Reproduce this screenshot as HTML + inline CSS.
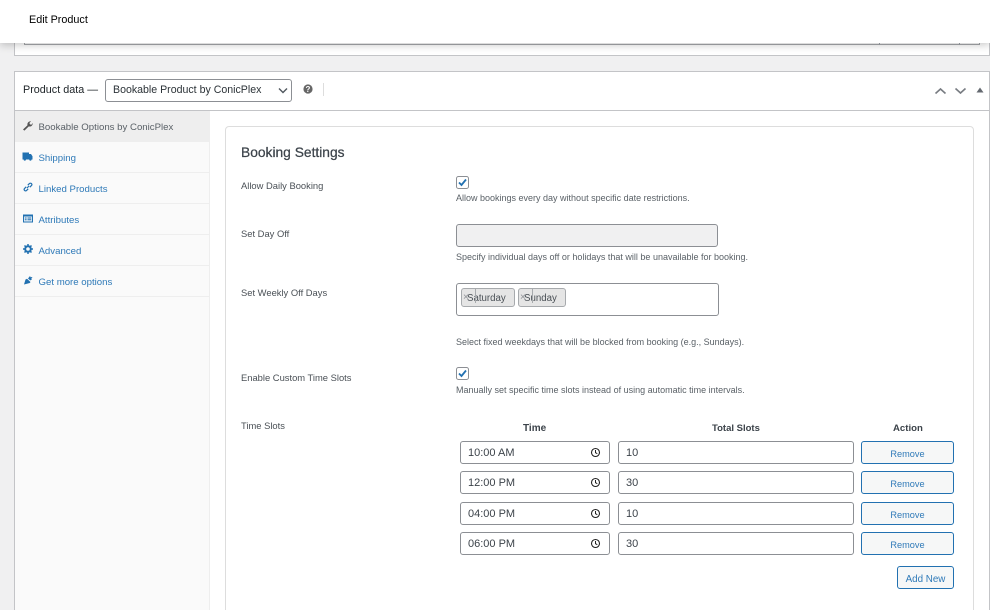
<!DOCTYPE html>
<html><head><meta charset="utf-8">
<style>
html,body{margin:0;padding:0;width:990px;height:610px;overflow:hidden;background:#f0f0f1}
body{position:relative;font-family:"Liberation Sans",sans-serif;font-size:9.65px;color:#3c434a}
.a{position:absolute;box-sizing:border-box}
.t{position:absolute;white-space:nowrap;line-height:14px}
.nav{color:#2f7ab8;left:38.5px}
.lab{left:241px;color:#4a5056;font-size:9.4px}
.desc{left:456px;color:#5a6167;font-size:9px}
.inp{position:absolute;box-sizing:border-box;height:23px;background:#fff;border:1px solid #8c8f94;border-radius:3px;font-size:11px;line-height:22px;color:#3c434a;padding-left:7px;white-space:nowrap}
.btn{position:absolute;box-sizing:border-box;left:861px;width:93px;height:23px;background:#f6f7f7;border:1px solid #2271b1;border-radius:3px;color:#2f7ab8;font-size:9.2px;line-height:23px;text-align:center}
.btn span{position:relative;top:1px}
.line{position:absolute;left:15px;width:194px;height:1px;background:#eee}
svg{position:absolute;display:block}
.chip{position:absolute;box-sizing:border-box;top:288px;height:19px;background:#e5e5e5;border:1px solid #a7aaad;border-radius:3px;font-size:9.7px;line-height:19px;color:#4a5056;white-space:nowrap}
.chip i{position:absolute;left:1px;top:-1px;font-style:normal;color:#8c8f94;font-size:10px}
.chip b{position:absolute;left:13px;top:0;width:1px;height:14px;background:#a7aaad}
.th{position:absolute;font-weight:bold;font-size:9.6px;color:#3c434a;top:422px;line-height:14px}
</style></head><body>

<!-- upper box -->
<div class="a" style="left:14px;top:30px;width:976px;height:26px;background:#fff;border:1px solid #c3c4c7"></div>
<div class="a" style="left:24px;top:30px;width:956px;height:15px;background:#fff;border:1px solid #a7aaad"></div>
<div class="a" style="left:0;top:0;width:990px;height:43px;background:#fff;box-shadow:0 2px 8px rgba(0,0,0,.22)"></div>
<div class="a" style="left:879px;top:43px;width:1px;height:2px;background:#8c8f94"></div>
<div class="a" style="left:959px;top:43px;width:1px;height:2px;background:#8c8f94"></div>
<div class="t" style="left:29px;top:13px;font-size:10.8px;color:#000">Edit Product</div>

<!-- product data box -->
<div class="a" style="left:14px;top:71px;width:976px;height:560px;background:#fff;border:1px solid #c3c4c7"></div>
<div class="a" style="left:15px;top:110px;width:974px;height:1px;background:#c3c4c7"></div>
<div class="t" style="left:23px;top:83px;font-size:10.8px;color:#1d2327">Product data —</div>
<div class="a" style="left:105px;top:79px;width:187px;height:23px;background:#fff;border:1px solid #8c8f94;border-radius:3px;font-size:10.6px;line-height:21px;color:#2c3338;padding-left:7px;white-space:nowrap">Bookable Product by ConicPlex</div>
<svg style="left:277px;top:86px" width="12" height="9" viewBox="0 0 12 9"><path d="M2 2.5l4 4 4-4" fill="none" stroke="#50575e" stroke-width="1.4"/></svg>
<svg style="left:303px;top:84px" width="10" height="10" viewBox="0 0 10 10"><circle cx="5" cy="5" r="4.6" fill="#666"/><text x="5" y="8" font-size="8" font-weight="bold" fill="#fff" text-anchor="middle" font-family="Liberation Sans">?</text></svg>
<div class="a" style="left:323px;top:83px;width:1px;height:13px;background:#ddd"></div>
<svg style="left:934px;top:86px" width="13" height="10" viewBox="0 0 13 10"><path d="M1.5 7.5L6.500 3l5 4.500" fill="none" stroke="#787c82" stroke-width="1.6"/></svg>
<svg style="left:954px;top:86px" width="13" height="10" viewBox="0 0 13 10"><path d="M1.500 2.500L6.500 7l5-4.500" fill="none" stroke="#787c82" stroke-width="1.6"/></svg>
<svg style="left:976px;top:87px" width="8" height="6" viewBox="0 0 8 6"><path d="M4 .5L7.500 5.500H.5z" fill="#646970"/></svg>

<!-- sidebar -->
<div class="a" style="left:15px;top:111px;width:195px;height:499px;background:#fafafa;border-right:1px solid #eee"></div>
<div class="a" style="left:15px;top:111px;width:195px;height:31px;background:#eee"></div>
<div class="line" style="top:172px"></div>
<div class="line" style="top:203px"></div>
<div class="line" style="top:234px"></div>
<div class="line" style="top:265px"></div>
<div class="line" style="top:296px"></div>

<svg style="left:22px;top:120px" width="11" height="11" viewBox="0 0 11 11"><path d="M1 9.500L5.500 5.200C5 3 6.500 1.200 9 1.200L7.400 3l.6 1.400 1.400.3L10.600 3c.4 2.300-1.600 4-3.800 3.400L2.400 10.600z" fill="#555"/></svg>
<div class="t" style="left:38.5px;top:121px;color:#5a6167">Bookable Options by ConicPlex</div>

<svg style="left:22px;top:151px" width="11" height="11" viewBox="0 0 11 11"><path d="M.5 1.500h6.500v1.500h2l1.500 2.200V8.500H9.600a1.200 1.200 0 0 1-2.400 0H4a1.200 1.200 0 0 1-2.400 0H.5z" fill="#2271b1"/></svg>
<div class="t nav" style="top:152px">Shipping</div>

<svg style="left:23px;top:182px" width="10" height="10" viewBox="0 0 10 10"><path d="M4 6l2-2M3.200 4.800L1.600 6.400a1.400 1.400 0 0 0 2 2L5.200 6.800M4.800 3.200L6.400 1.600a1.400 1.400 0 0 1 2 2L6.800 5.200" fill="none" stroke="#2271b1" stroke-width="1.2"/></svg>
<div class="t nav" style="top:183px">Linked Products</div>

<svg style="left:23px;top:214px" width="10" height="9" viewBox="0 0 10 9"><path d="M0 .5h10v8H0z" fill="#2271b1"/><path d="M1 2.500h8v5H1z" fill="#fff" opacity=".9"/><path d="M1.800 3.500h1.800v1H1.800zM1.800 5.300h1.800v1H1.800zM4.500 3.500h3.800v1H4.500zM4.500 5.300h3.800v1H4.500z" fill="#2271b1"/></svg>
<div class="t nav" style="top:214px">Attributes</div>

<svg style="left:23px;top:244px" width="10" height="10" viewBox="0 0 10 10"><circle cx="5" cy="5" r="2.800" fill="none" stroke="#2271b1" stroke-width="2"/><path d="M5 0v2M5 8v2M0 5h2M8 5h2M1.500 1.500l1.300 1.300M7.200 7.200l1.300 1.300M1.500 8.500l1.300-1.300M7.200 2.800l1.300-1.300" stroke="#2271b1" stroke-width="1.500"/></svg>
<div class="t nav" style="top:245px">Advanced</div>

<svg style="left:23px;top:275px" width="10" height="10" viewBox="0 0 10 10"><path d="M1 9.500L2.500 4.500l1.500-.8L7.500 7 6.800 8zM5 3.500L7 1l.6 1.200L9.500 2 8.200 4l.8.600-1.800.8z" fill="#2271b1"/></svg>
<div class="t nav" style="top:276px">Get more options</div>

<!-- card -->
<div class="a" style="left:225px;top:126px;width:749px;height:500px;background:#fff;border:1px solid #ddd;border-radius:4px"></div>
<div class="t" style="left:241px;top:146px;font-size:13.8px;color:#3c434a;-webkit-text-stroke:.25px #3c434a">Booking Settings</div>

<div class="t lab" style="top:179px">Allow Daily Booking</div>
<svg style="left:456px;top:176px" width="13" height="13" viewBox="0 0 13 13"><rect x=".5" y=".5" width="12" height="12" rx="2" fill="#fff" stroke="#8c8f94"/><path d="M3 6.500l2.500 2.500 4.500-5.500" fill="none" stroke="#2271b1" stroke-width="1.800"/></svg>
<div class="t desc" style="top:191px">Allow bookings every day without specific date restrictions.</div>

<div class="t lab" style="top:227px">Set Day Off</div>
<div class="a" style="left:456px;top:224px;width:262px;height:23px;background:#f0f0f1;border:1px solid #8c8f94;border-radius:3px"></div>
<div class="t desc" style="top:250px">Specify individual days off or holidays that will be unavailable for booking.</div>

<div class="t lab" style="top:286px">Set Weekly Off Days</div>
<div class="a" style="left:456px;top:283px;width:263px;height:33px;background:#fff;border:1px solid #8c8f94;border-radius:3px"></div>
<div class="chip" style="left:461px;width:54px;padding-left:5px"><i>×</i>Saturday<b></b></div>
<div class="chip" style="left:518px;width:48px;padding-left:5px"><i>×</i>Sunday<b></b></div>
<div class="t desc" style="top:335px">Select fixed weekdays that will be blocked from booking (e.g., Sundays).</div>

<div class="t lab" style="top:371px">Enable Custom Time Slots</div>
<svg style="left:456px;top:367px" width="13" height="13" viewBox="0 0 13 13"><rect x=".5" y=".5" width="12" height="12" rx="2" fill="#fff" stroke="#8c8f94"/><path d="M3 6.500l2.500 2.500 4.500-5.500" fill="none" stroke="#2271b1" stroke-width="1.800"/></svg>
<div class="t desc" style="top:383px">Manually set specific time slots instead of using automatic time intervals.</div>

<div class="t lab" style="top:419px">Time Slots</div>
<div class="th" style="left:523px;font-size:10px">Time</div>
<div class="th" style="left:712px;font-size:9.5px">Total Slots</div>
<div class="th" style="left:893px">Action</div>

<div class="inp" style="left:460px;top:441px;width:150px">10:00 AM</div>
<div class="inp" style="left:618px;top:441px;width:236px">10</div>
<div class="btn" style="top:441px"><span>Remove</span></div>
<svg style="left:590px;top:447px" width="11" height="11" viewBox="0 0 11 11"><circle cx="5.500" cy="5.500" r="4" fill="none" stroke="#222" stroke-width="1.100"/><path d="M5.500 3v2.700l1.800 1" fill="none" stroke="#222"/></svg>

<div class="inp" style="left:460px;top:471px;width:150px">12:00 PM</div>
<div class="inp" style="left:618px;top:471px;width:236px">30</div>
<div class="btn" style="top:471px"><span>Remove</span></div>
<svg style="left:590px;top:477px" width="11" height="11" viewBox="0 0 11 11"><circle cx="5.500" cy="5.500" r="4" fill="none" stroke="#222" stroke-width="1.100"/><path d="M5.500 3v2.700l1.800 1" fill="none" stroke="#222"/></svg>

<div class="inp" style="left:460px;top:502px;width:150px">04:00 PM</div>
<div class="inp" style="left:618px;top:502px;width:236px">10</div>
<div class="btn" style="top:502px"><span>Remove</span></div>
<svg style="left:590px;top:508px" width="11" height="11" viewBox="0 0 11 11"><circle cx="5.500" cy="5.500" r="4" fill="none" stroke="#222" stroke-width="1.100"/><path d="M5.500 3v2.700l1.800 1" fill="none" stroke="#222"/></svg>

<div class="inp" style="left:460px;top:532px;width:150px">06:00 PM</div>
<div class="inp" style="left:618px;top:532px;width:236px">30</div>
<div class="btn" style="top:532px"><span>Remove</span></div>
<svg style="left:590px;top:538px" width="11" height="11" viewBox="0 0 11 11"><circle cx="5.500" cy="5.500" r="4" fill="none" stroke="#222" stroke-width="1.100"/><path d="M5.500 3v2.700l1.800 1" fill="none" stroke="#222"/></svg>

<div class="btn" style="left:897px;top:566px;width:57px;font-size:9.8px"><span>Add New</span></div>
</body></html>
